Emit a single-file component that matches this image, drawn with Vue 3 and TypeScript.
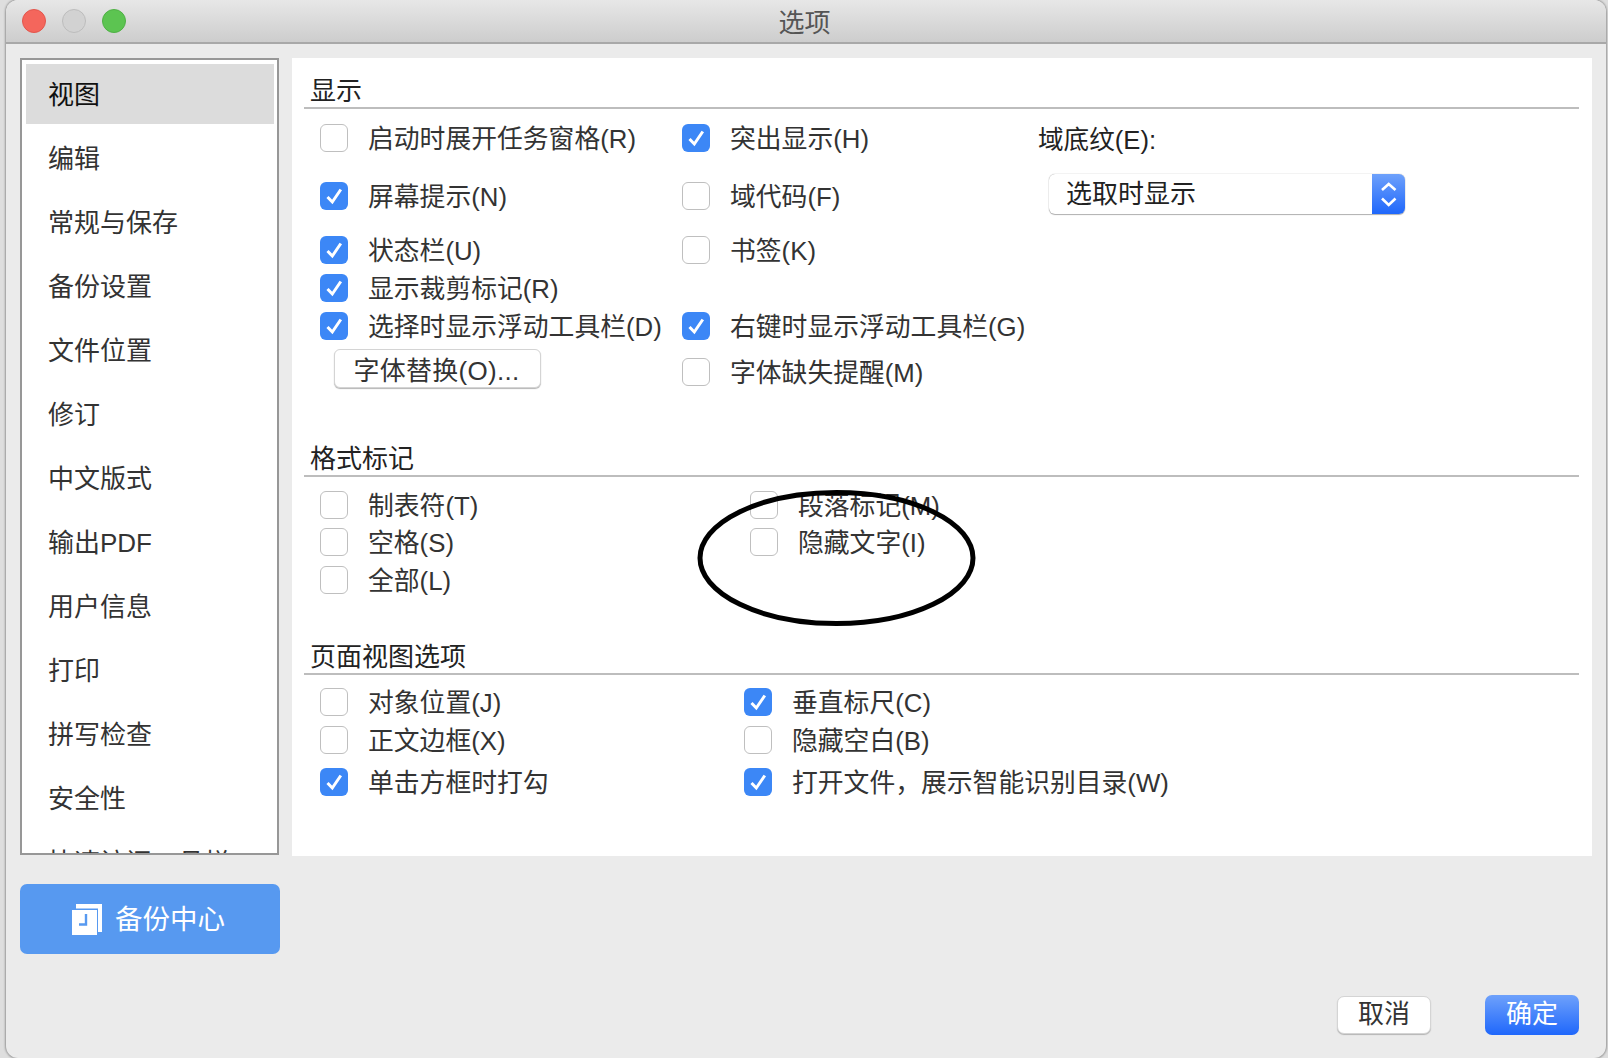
<script setup lang="ts">
type Opt = { text: string; on?: boolean; col: number; row: number; low?: boolean }

const navItems = ['视图', '编辑', '常规与保存', '备份设置', '文件位置', '修订', '中文版式', '输出PDF', '用户信息', '打印', '拼写检查', '安全性', '快速访问工具栏']

const displayOpts: Opt[] = [
  { text: '启动时展开任务窗格(R)', col: 1, row: 1 },
  { text: '屏幕提示(N)', on: true, col: 1, row: 2 },
  { text: '状态栏(U)', on: true, col: 1, row: 3 },
  { text: '显示裁剪标记(R)', on: true, col: 1, row: 4 },
  { text: '选择时显示浮动工具栏(D)', on: true, col: 1, row: 5 },
  { text: '突出显示(H)', on: true, col: 2, row: 1 },
  { text: '域代码(F)', col: 2, row: 2 },
  { text: '书签(K)', col: 2, row: 3 },
  { text: '右键时显示浮动工具栏(G)', on: true, col: 2, row: 5 },
  { text: '字体缺失提醒(M)', col: 2, row: 6, low: true }
]

const markOpts: Opt[] = [
  { text: '制表符(T)', col: 1, row: 1 },
  { text: '空格(S)', col: 1, row: 2 },
  { text: '全部(L)', col: 1, row: 3 },
  { text: '段落标记(M)', col: 2, row: 1 },
  { text: '隐藏文字(I)', col: 2, row: 2 }
]

const viewOpts: Opt[] = [
  { text: '对象位置(J)', col: 1, row: 1 },
  { text: '正文边框(X)', col: 1, row: 2 },
  { text: '单击方框时打勾', on: true, col: 1, row: 3 },
  { text: '垂直标尺(C)', on: true, col: 2, row: 1 },
  { text: '隐藏空白(B)', col: 2, row: 2 },
  { text: '打开文件，展示智能识别目录(W)', on: true, col: 2, row: 3 }
]

function place(o: Opt) {
  return { gridColumn: o.col, gridRow: o.row }
}
</script>

<template>
  <div class="window">
    <div class="titlebar">
      <div class="lights">
        <span class="light red"></span>
        <span class="light grey"></span>
        <span class="light green"></span>
      </div>
      <div class="title">选项</div>
      <div></div>
    </div>

    <div class="body">
      <div class="left">
        <ul class="nav">
          <li v-for="(item, i) in navItems" :key="item" class="nav-item" :class="{ active: i === 0 }">{{ item }}</li>
        </ul>
        <button class="backup">
          <svg width="30" height="31" viewBox="0 0 30 31">
            <path d="M4 0H30V28H26V4.5H4Z" fill="#fff" />
            <rect x="0" y="6" width="25" height="25" fill="#fff" />
            <path d="M14 10V20.5H7" fill="none" stroke="#5799f0" stroke-width="2.4" />
          </svg>
          <span class="backup-text">备份中心</span>
        </button>
      </div>

      <div class="right">
        <div class="panel">
          <section class="sec-display">
            <h3>显示</h3>
            <div class="grid grid-display">
              <label v-for="o in displayOpts" :key="o.text" class="opt" :class="{ low: o.low }" :style="place(o)">
                <span class="box" :class="{ on: o.on }">
                  <svg v-if="o.on" width="28" height="28" viewBox="0 0 28 28">
                    <path d="M7.5 15L12.3 20L20.8 7.5" fill="none" stroke="#fff" stroke-width="3" />
                  </svg>
                </span>
                <span class="opt-text">{{ o.text }}</span>
              </label>
              <button class="font-btn">字体替换(O)...</button>
              <div class="shade">
                <div class="shade-label">域底纹(E):</div>
                <div class="select">
                  <span class="select-text">选取时显示</span>
                  <span class="select-arrows">
                    <svg width="33" height="40" viewBox="0 0 33 40">
                      <path d="M10 16L16.7 10L23.5 16M10 24.5L16.7 31L23.5 24.5" fill="none" stroke="#fff" stroke-width="2.6" />
                    </svg>
                  </span>
                </div>
              </div>
            </div>
          </section>

          <section class="sec-marks">
            <h3>格式标记</h3>
            <div class="grid grid-marks">
              <label v-for="o in markOpts" :key="o.text" class="opt" :style="place(o)">
                <span class="box"></span>
                <span class="opt-text">{{ o.text }}</span>
              </label>
              <svg class="circle" width="279" height="136" viewBox="0 0 279 136">
                <ellipse cx="139.5" cy="68" rx="136.5" ry="65.5" fill="none" stroke="#000" stroke-width="5" />
              </svg>
            </div>
          </section>

          <section class="sec-view">
            <h3>页面视图选项</h3>
            <div class="grid grid-view">
              <label v-for="o in viewOpts" :key="o.text" class="opt" :style="place(o)">
                <span class="box" :class="{ on: o.on }">
                  <svg v-if="o.on" width="28" height="28" viewBox="0 0 28 28">
                    <path d="M7.5 15L12.3 20L20.8 7.5" fill="none" stroke="#fff" stroke-width="3" />
                  </svg>
                </span>
                <span class="opt-text">{{ o.text }}</span>
              </label>
            </div>
          </section>
        </div>

        <div class="footer">
          <button class="btn-cancel"><span class="btn-text">取消</span></button>
          <button class="btn-ok"><span class="btn-text">确定</span></button>
        </div>
      </div>
    </div>
  </div>
</template>

<style>
html,
body {
  margin: 0;
  background: #dedede;
}
</style>

<style scoped>
.window {
  width: 1600px;
  height: 1058px;
  margin-left: 6px;
  background: #ebebeb;
  border-radius: 12px;
  box-shadow: 0 0 2px 1px #9a9a9a;
  overflow: hidden;
  font-family: "Liberation Sans", "Noto Sans CJK SC", sans-serif;
  font-size: 26px;
  color: #333;
}

.titlebar {
  height: 42px;
  display: grid;
  grid-template-columns: 1fr auto 1fr;
  align-items: center;
  padding: 0 19px 0 16px;
  background: linear-gradient(#e7e7e7, #cdcdcd);
  border-bottom: 2px solid #a8a8a8;
}

.lights {
  display: flex;
  gap: 16px;
}

.light {
  width: 24px;
  height: 24px;
  border-radius: 50%;
  box-sizing: border-box;
}

.red {
  background: #f4665c;
  border: 1px solid #e2564d;
}

.grey {
  background: #d2d2d2;
  border: 1px solid #bcbcbc;
}

.green {
  background: #5cc451;
  border: 1px solid #4fb045;
}

.title {
  color: #555;
  line-height: 46px;
  height: 42px;
}

.body {
  display: flex;
  gap: 12px;
  padding: 14px 14px 0;
}

.left {
  width: 260px;
  flex: none;
}

.nav {
  box-sizing: border-box;
  width: 259px;
  height: 797px;
  margin: 0;
  padding: 4px 3px 0 4px;
  list-style: none;
  background: #fff;
  border: 2px solid #979797;
  overflow: hidden;
}

.nav-item {
  height: 60px;
  line-height: 63px;
  margin-bottom: 4px;
  padding-left: 22px;
  white-space: nowrap;
}

.nav-item.active {
  background: #dcdcdc;
  color: #111;
}

.backup {
  width: 260px;
  height: 70px;
  margin-top: 29px;
  padding: 0 3px 0 0;
  display: flex;
  align-items: center;
  justify-content: center;
  gap: 13px;
  border: 0;
  border-radius: 7px;
  background: #5799f0;
  color: #fff;
  font: inherit;
  font-size: 27.5px;
}

.backup-text {
  margin-bottom: 4px;
}

.right {
  width: 1300px;
}

.panel {
  box-sizing: border-box;
  height: 798px;
  padding: 18px 13px 0 12px;
  background: #fff;
}

h3 {
  height: 31px;
  margin: 0;
  padding-left: 6px;
  font-size: 26px;
  font-weight: 400;
  line-height: 30px;
  color: #222;
  border-bottom: 2px solid #bdbdbd;
}

.sec-marks {
  margin-top: 46px;
}

.sec-view {
  margin-top: 48px;
}

.grid {
  position: relative;
  display: grid;
  margin-left: 16px;
}

.grid-display {
  margin-top: 15px;
  grid-template-columns: 362px 357px 1fr;
  grid-template-rows: 58px 54px 38px 38px 37px 49px;
}

.grid-marks {
  margin-top: 14px;
  grid-template-columns: 430px 1fr;
  grid-template-rows: 37px 38px 28px;
}

.grid-view {
  margin-top: 13px;
  grid-template-columns: 424px 1fr;
  grid-template-rows: 38px 42px 28px;
}

.opt {
  display: flex;
  align-items: center;
  gap: 20px;
  height: 28px;
  font-size: 25.8px;
  line-height: 28px;
  white-space: nowrap;
}

.opt-text {
  padding-top: 2px;
}

.opt.low {
  margin-top: 9px;
}

.box {
  box-sizing: border-box;
  flex: none;
  width: 28px;
  height: 28px;
  background: #fff;
  border: 1px solid #bfbfbf;
  border-radius: 6px;
}

.box.on {
  background: #3c87f6;
  border: 0;
}

.box svg {
  display: block;
}

.font-btn {
  grid-column: 1;
  grid-row: 6;
  justify-self: start;
  width: 207px;
  height: 39px;
  margin-left: 14px;
  padding: 0 2px 0 0;
  background: #fff;
  border: 1px solid #d4d4d4;
  border-radius: 6px;
  box-shadow: 0 1px 1px #b5b5b5;
  font: inherit;
  letter-spacing: 0.3px;
  color: #333;
}

.shade {
  grid-column: 3;
  grid-row: 1 / -1;
}

.shade-label {
  height: 28px;
  margin-left: -1px;
  font-size: 25.6px;
  line-height: 32px;
  color: #222;
}

.select {
  display: flex;
  justify-content: space-between;
  width: 356px;
  height: 40px;
  margin: 22px 0 0 10px;
  background: #fff;
  border-radius: 6px;
  box-shadow: 0 0 1px #888, 0 1px 1px #b5b5b5;
  overflow: hidden;
}

.select-text {
  padding-left: 17px;
  line-height: 40px;
  color: #222;
}

.select-arrows {
  width: 33px;
  height: 40px;
  background: linear-gradient(#6ea1fb, #1f67fb);
}

.select-arrows svg {
  display: block;
}

.circle {
  position: absolute;
  left: 377px;
  top: -1px;
}

.footer {
  display: flex;
  justify-content: flex-end;
  align-items: center;
  gap: 54px;
  margin-top: 139px;
  padding-right: 13px;
}

.btn-cancel,
.btn-ok {
  width: 94px;
  padding: 0;
  border: 0;
  border-radius: 7px;
  font: inherit;
}

.btn-text {
  display: block;
  line-height: 30px;
  margin-bottom: 3px;
}

.btn-cancel {
  height: 38px;
  background: #fff;
  border: 1px solid #d4d4d4;
  box-shadow: 0 1px 1px #b5b5b5;
  color: #333;
}

.btn-ok {
  height: 40px;
  background: linear-gradient(#6ea1fb, #1f67fb);
  color: #fff;
}
</style>
